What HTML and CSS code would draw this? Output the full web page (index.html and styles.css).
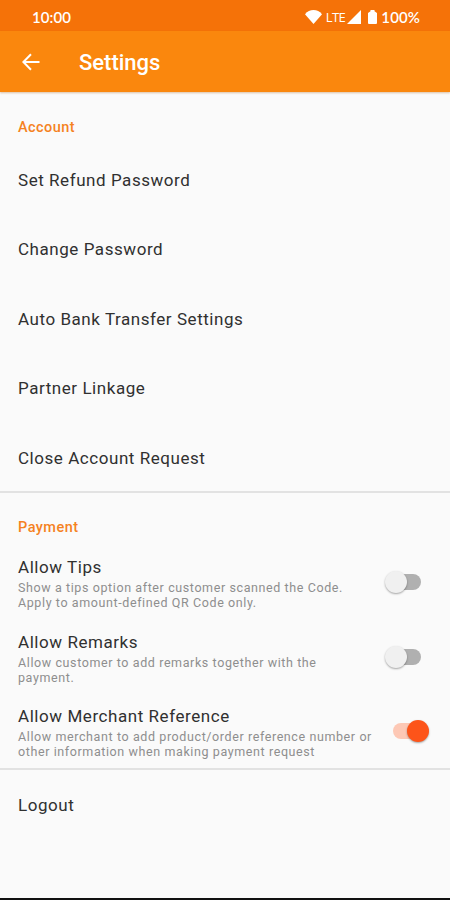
FILE: index.html
```html
<!DOCTYPE html>
<html lang="en">
<head>
  <meta charset="UTF-8" />
  <meta name="viewport" content="width=device-width, initial-scale=1.0" />
  <title>Settings</title>
  <link rel="stylesheet" href="styles.css">
</head>
<body>
  <div class="status-bar">
    <span class="clock">10:00</span>
    <div class="status-icons">
      <svg class="wifi" width="17" height="14" viewBox="0 0 17 14"><path d="M0 4.200Q3.500 0 8.500 0T17 4.200L8.500 14z" fill="#fff"/></svg>
      <span class="lte">LTE</span>
      <svg class="signal" width="14" height="14" viewBox="0 0 14 14"><path d="M14 0v14H0z" fill="#fff"/></svg>
      <svg class="battery" width="9" height="14" viewBox="0 0 9 14"><path d="M2.500 0h4v1.300L9 3V13q0 1-1 1H1q-1 0-1-1V3l2.500-1.700z" fill="#fff"/></svg>
      <span class="percent">100%</span>
    </div>
  </div>

  <header class="app-bar">
    <svg class="back" width="18" height="18" viewBox="0 0 18 18"><path d="M17.500 9H1.800M9 1.200L1.400 9 9 16.800" fill="none" stroke="#fff" stroke-width="2"/></svg>
    <h1>Settings</h1>
  </header>

  <main>
    <section class="account">
      <h2>Account</h2>
      <div class="item">Set Refund Password</div>
      <div class="item">Change Password</div>
      <div class="item">Auto Bank Transfer Settings</div>
      <div class="item">Partner Linkage</div>
      <div class="item">Close Account Request</div>
    </section>

    <section class="payment">
      <h2>Payment</h2>
      <label class="option">
        <span class="text">
          <span class="name">Allow Tips</span>
          <span class="desc">Show a tips option after customer scanned the Code.<br>Apply to amount-defined QR Code only.</span>
        </span>
        <input type="checkbox" />
        <span class="switch"></span>
      </label>
      <label class="option">
        <span class="text">
          <span class="name">Allow Remarks</span>
          <span class="desc">Allow customer to add remarks together with the<br>payment.</span>
        </span>
        <input type="checkbox" />
        <span class="switch"></span>
      </label>
      <label class="option">
        <span class="text">
          <span class="name">Allow Merchant Reference</span>
          <span class="desc">Allow merchant to add product/order reference number or<br>other information when making payment request</span>
        </span>
        <input type="checkbox" checked />
        <span class="switch"></span>
      </label>
    </section>

    <div class="item logout">Logout</div>
  </main>
</body>
</html>
```
FILE: styles.css
```css
/* === Theme variables === */
:root{
  --bg:#fafafa;
  --fg:#303030;
  --muted:#8e8e8e;
  --bar:#fa870d;
  --bar-dark:#f57208;
  --accent:#f5821f;
  --on:#fd5419;
  --line:#e2e2e2;
}

/* === Base layout === */
*{box-sizing:border-box}
body{
  margin:0;
  height:100vh;
  display:flex;
  flex-direction:column;
  overflow:hidden;
  font-family:Roboto,sans-serif;
  background:var(--bg);
  color:var(--fg);
  border-bottom:2px solid #111;
}
svg{display:block;flex:none}
main{flex:1}

/* === Status bar === */
.status-bar{flex:none;height:31px;padding:2px 30px 0 32px;display:flex;align-items:center;justify-content:space-between;background:var(--bar-dark);color:#fff}
.clock,.percent{font-family:Lato,sans-serif;font-size:15px;font-weight:600;letter-spacing:.1px}
.status-icons{display:flex;align-items:center}
.lte{margin:0 2px 0 4px;font-family:"Open Sans",sans-serif;font-size:13px;letter-spacing:-.5px}
.battery{margin:0 4px 0 7px}

/* === App bar === */
.app-bar{flex:none;height:61px;padding:0 22px;display:flex;align-items:center;gap:39px;background:var(--bar);color:#fff;box-shadow:0 1px 2px rgba(160,80,0,.35);z-index:1}
h1{margin:2px 0 0;font-size:22px;font-weight:500}

/* === Sections === */
h2{margin:0;padding-left:18px;font-size:14.500px;font-weight:500;letter-spacing:.45px;color:var(--accent)}
section{border-bottom:2px solid var(--line)}
.account{height:401px}
.account h2{height:54px;line-height:71px}
.item{height:69.400px;padding-left:18px;line-height:69.400px;font-size:17px;letter-spacing:.55px}
.payment{height:277px}
.payment h2{height:58px;line-height:70px}
.logout{padding-top:1px}

/* === Options === */
.option{height:74.500px;padding:6px 21px 0 18px;display:flex;align-items:flex-start}
.text{flex:1;white-space:nowrap}
.name,.desc{display:block}
.name{font-size:17px;line-height:20px;letter-spacing:.56px}
.desc{margin-top:3px;font-size:12.500px;line-height:15px;letter-spacing:.6px;color:var(--muted)}

/* === Switch === */
.option input{position:absolute;opacity:0}
.switch{position:relative;width:44px;height:22px;margin-top:14px}
.switch::before{content:"";position:absolute;left:8px;top:3px;width:28px;height:16px;border-radius:8px;background:#b0b0b0}
.switch::after{content:"";position:absolute;left:0;top:0;width:22px;height:22px;border-radius:50%;background:#f0f0f0;box-shadow:0 1px 2px rgba(0,0,0,.35)}
input:checked + .switch::before{background:#fdc8b5}
input:checked + .switch::after{left:22px;background:var(--on)}
```
